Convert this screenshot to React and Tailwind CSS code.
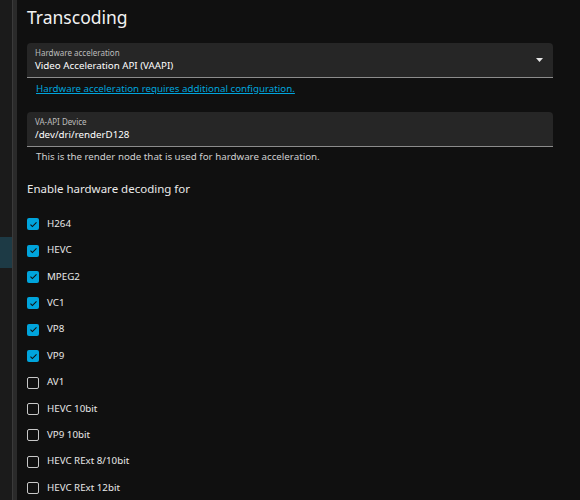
import { useState } from 'react';

const codecs = [
  { id: 'h264', label: 'H264', on: true },
  { id: 'hevc', label: 'HEVC', on: true },
  { id: 'mpeg2', label: 'MPEG2', on: true },
  { id: 'vc1', label: 'VC1', on: true },
  { id: 'vp8', label: 'VP8', on: true },
  { id: 'vp9', label: 'VP9', on: true },
  { id: 'av1', label: 'AV1', on: false },
  { id: 'hevc10', label: 'HEVC 10bit', on: false },
  { id: 'vp910', label: 'VP9 10bit', on: false },
  { id: 'rext810', label: 'HEVC RExt 8/10bit', on: false },
  { id: 'rext12', label: 'HEVC RExt 12bit', on: false },
];

function Field({ label, value, select }) {
  return (
    <div className="relative h-[35px] rounded-t-[4px] bg-[#262626] border-b-[1.5px] border-[#8c8c8c] pl-[8px] pt-[4px]">
      <div className="text-[8px] leading-[11px] text-[#bdbdbd]">{label}</div>
      <div className="text-[9.75px] leading-[16px] text-white">{value}</div>
      {select && (
        <svg className="absolute right-[10px] top-[15px]" width="7" height="4" viewBox="0 0 7 4">
          <path d="M0 0h7L3.5 4z" fill="#e6e6e6" />
        </svg>
      )}
    </div>
  );
}

function Check({ on }) {
  if (on) {
    return (
      <span className="flex h-[12px] w-[12px] items-center justify-center rounded-[2px] bg-[#00a4dc]">
        <svg width="9" height="9" viewBox="0 0 24 24">
          <path d="M4 12.5l5 5L20 6.5" fill="none" stroke="#111" strokeWidth="3" />
        </svg>
      </span>
    );
  }
  return <span className="h-[12px] w-[12px] rounded-[2px] border-[1.5px] border-[#c8c8c8]" />;
}

export default function App() {
  const [state, setState] = useState(Object.fromEntries(codecs.map((c) => [c.id, c.on])));

  return (
    <div className="flex h-[500px] w-[580px] overflow-hidden bg-[#101010] font-['Noto_Sans',sans-serif]">
      {/* collapsed nav drawer */}
      <div className="flex w-[12px] flex-col bg-[#1b1b1b]">
        <div className="h-[237px]" />
        <div className="h-[31px] bg-[#1d3a45]" />
      </div>
      <div className="w-[5px] border-l border-[#3a3a3a] bg-[#2a2a2a]" />

      <div className="flex-1 pl-[10px] pr-[27px]">
        <h1 className="pt-[5px] text-[17.5px] leading-[24px] text-[#f2f2f2]">Transcoding</h1>

        <div className="mt-[14px]">
          <Field label="Hardware acceleration" value="Video Acceleration API (VAAPI)" select />
          <a className="mt-[3px] block pl-[9px] text-[9.75px] leading-[15px] text-[#00a4dc] underline">
            Hardware acceleration requires additional configuration.
          </a>
        </div>

        <div className="mt-[16px]">
          <Field label="VA-API Device" value="/dev/dri/renderD128" />
          <div className="mt-[2px] pl-[9px] text-[9.75px] leading-[15px] text-[#cfcfcf]">
            This is the render node that is used for hardware acceleration.
          </div>
        </div>

        <h3 className="mt-[17px] text-[11.5px] leading-[16px] text-[#eaeaea]">Enable hardware decoding for</h3>

        <div className="mt-[14px] flex flex-col">
          {codecs.map((c) => (
            <label
              key={c.id}
              className="flex h-[26.4px] items-center gap-[8px] text-[9.75px] text-[#e8e8e8]"
              onClick={() => setState((s) => ({ ...s, [c.id]: !s[c.id] }))}
            >
              <Check on={state[c.id]} />
              {c.label}
            </label>
          ))}
        </div>
      </div>
    </div>
  );
}
